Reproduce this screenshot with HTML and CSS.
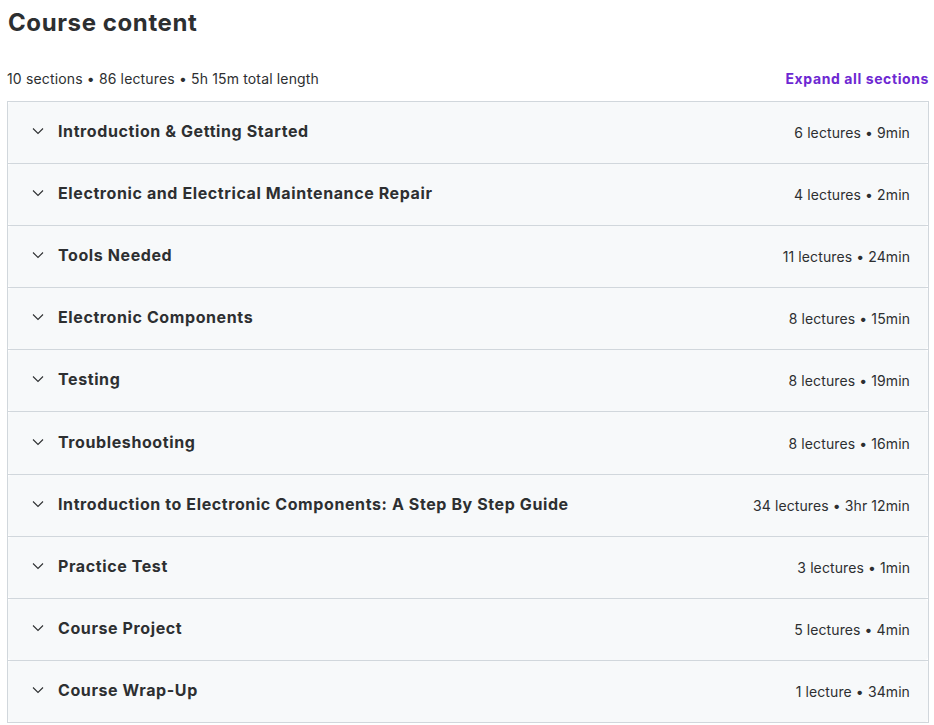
FILE: index.html
```html
<!DOCTYPE html>
<html lang="en">
<head>
    <meta charset="UTF-8">
    <meta name="viewport" content="width=device-width, initial-scale=1.0">
    <title>Course content</title>
    <link rel="stylesheet" href="styles.css">
</head>
<body>
    <div class="course-content">
        <h2 class="title">Course content</h2>
        <div class="summary">
            <span class="stats">10 sections • 86 lectures • 5h 15m total length</span>
            <button class="expand-all">Expand all sections</button>
        </div>
        <div class="sections">
            <div class="section">
                <div class="section-header">
                    <svg class="chevron" viewBox="0 0 12 12"><path d="M1 3.5 6 8.5l5-5"/></svg>
                    <span class="section-title">Introduction &amp; Getting Started</span>
                    <span class="section-meta">6 lectures • 9min</span>
                </div>
            </div>
            <div class="section">
                <div class="section-header">
                    <svg class="chevron" viewBox="0 0 12 12"><path d="M1 3.5 6 8.5l5-5"/></svg>
                    <span class="section-title">Electronic and Electrical Maintenance Repair</span>
                    <span class="section-meta">4 lectures • 2min</span>
                </div>
            </div>
            <div class="section">
                <div class="section-header">
                    <svg class="chevron" viewBox="0 0 12 12"><path d="M1 3.5 6 8.5l5-5"/></svg>
                    <span class="section-title">Tools Needed</span>
                    <span class="section-meta">11 lectures • 24min</span>
                </div>
            </div>
            <div class="section">
                <div class="section-header">
                    <svg class="chevron" viewBox="0 0 12 12"><path d="M1 3.5 6 8.5l5-5"/></svg>
                    <span class="section-title">Electronic Components</span>
                    <span class="section-meta">8 lectures • 15min</span>
                </div>
            </div>
            <div class="section">
                <div class="section-header">
                    <svg class="chevron" viewBox="0 0 12 12"><path d="M1 3.5 6 8.5l5-5"/></svg>
                    <span class="section-title">Testing</span>
                    <span class="section-meta">8 lectures • 19min</span>
                </div>
            </div>
            <div class="section">
                <div class="section-header">
                    <svg class="chevron" viewBox="0 0 12 12"><path d="M1 3.5 6 8.5l5-5"/></svg>
                    <span class="section-title">Troubleshooting</span>
                    <span class="section-meta">8 lectures • 16min</span>
                </div>
            </div>
            <div class="section">
                <div class="section-header">
                    <svg class="chevron" viewBox="0 0 12 12"><path d="M1 3.5 6 8.5l5-5"/></svg>
                    <span class="section-title">Introduction to Electronic Components: A Step By Step Guide</span>
                    <span class="section-meta">34 lectures • 3hr 12min</span>
                </div>
            </div>
            <div class="section">
                <div class="section-header">
                    <svg class="chevron" viewBox="0 0 12 12"><path d="M1 3.5 6 8.5l5-5"/></svg>
                    <span class="section-title">Practice Test</span>
                    <span class="section-meta">3 lectures • 1min</span>
                </div>
            </div>
            <div class="section">
                <div class="section-header">
                    <svg class="chevron" viewBox="0 0 12 12"><path d="M1 3.5 6 8.5l5-5"/></svg>
                    <span class="section-title">Course Project</span>
                    <span class="section-meta">5 lectures • 4min</span>
                </div>
            </div>
            <div class="section">
                <div class="section-header">
                    <svg class="chevron" viewBox="0 0 12 12"><path d="M1 3.5 6 8.5l5-5"/></svg>
                    <span class="section-title">Course Wrap-Up</span>
                    <span class="section-meta">1 lecture • 34min</span>
                </div>
            </div>
        </div>
    </div>
</body>
</html>
```

FILE: styles.css
```css
*{
    margin: 0;
    padding: 0;
    box-sizing: border-box;
}
body {
    background-color: #fff;
    color: #2d2f31;
    font-family: Inter, "Liberation Sans", sans-serif;
}
.course-content {
    width: 922px;
    margin-left: 7px;
}
.title {
    font-size: 24px;
    font-weight: 700;
    line-height: 30px;
    padding-top: 8px;
    padding-left: 1px;
    letter-spacing: 0.6px;
}
.summary {
    display: flex;
    justify-content: space-between;
    align-items: center;
    margin-top: 30px;
    height: 20px;
    margin-bottom: 13px;
}
.stats {
    font-size: 14px;
    letter-spacing: 0.15px;
}
.expand-all {
    border: none;
    background: none;
    font-family: inherit;
    font-size: 14px;
    font-weight: 700;
    color: #6d28d2;
    letter-spacing: 0.6px;
    cursor: pointer;
}
.sections {
    border: 1px solid #d1d7dc;
    border-bottom: none;
}
.section {
    border-bottom: 1px solid #d1d7dc;
}
.section-header {
    display: flex;
    align-items: center;
    height: 61.1px;
    padding: 0 18px 0 24px;
    /* 标题背景 */
    background-color: #f7f9fa;
    border-radius: 4px;
}
.chevron {
    width: 12px;
    height: 12px;
    fill: none;
    stroke: #2d2f31;
    stroke-width: 1.1;
    margin-right: 14px;
    margin-bottom: 3px;
    flex-shrink: 0;
}
.section-title {
    flex: 1;
    font-size: 16px;
    font-weight: 700;
    letter-spacing: 0.6px;
    padding-bottom: 3px;
}
.section-meta {
    font-size: 14px;
    letter-spacing: 0.1px;
}
```
